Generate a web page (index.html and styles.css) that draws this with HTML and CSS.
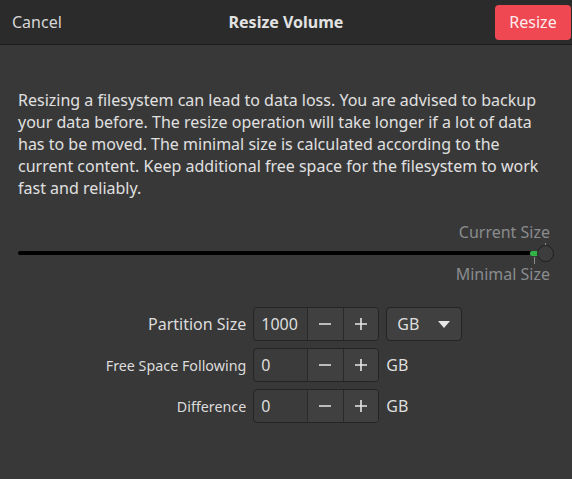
FILE: index.html
```html
<!DOCTYPE html>
<html lang="en">
<head>
  <meta charset="UTF-8">
  <title>Resize Volume</title>
  <link rel="stylesheet" href="styles.css">
</head>
<body>

  <div class="dialog">
    <header class="headerbar">
      <button class="flat-btn">Cancel</button>
      <div class="title">Resize Volume</div>
      <button class="btn destructive">Resize</button>
    </header>

    <main class="content">
      <p class="notice">Resizing a filesystem can lead to data loss. You are advised to backup your data before. The resize operation will take longer if a lot of data has to be moved. The minimal size is calculated according to the current content. Keep additional free space for the filesystem to work fast and reliably.</p>

      <div class="scale-block">
        <div class="mark-label">Current Size</div>
        <div class="scale">
          <div class="trough"></div>
          <div class="fill"></div>
          <div class="tick tick-top"></div>
          <div class="tick tick-bottom"></div>
          <div class="knob"></div>
        </div>
        <div class="mark-label">Minimal Size</div>
      </div>

      <div class="size-grid">
        <label class="row-label big">Partition Size</label>
        <div class="spin">
          <div class="spin-entry">1000</div>
          <button class="spin-btn"><svg width="16" height="16" viewBox="0 0 16 16"><path d="M2 8h12" stroke="#e6e6e6" stroke-width="1.6"/></svg></button>
          <button class="spin-btn"><svg width="16" height="16" viewBox="0 0 16 16"><path d="M2 8h12M8 2v12" stroke="#e6e6e6" stroke-width="1.6"/></svg></button>
        </div>
        <button class="combo">
          <span>GB</span>
          <svg width="12" height="7" viewBox="0 0 12 7"><path d="M0 0h12L6 7z" fill="#e6e6e6"/></svg>
        </button>

        <label class="row-label">Free Space Following</label>
        <div class="spin">
          <div class="spin-entry">0</div>
          <button class="spin-btn"><svg width="16" height="16" viewBox="0 0 16 16"><path d="M2 8h12" stroke="#e6e6e6" stroke-width="1.6"/></svg></button>
          <button class="spin-btn"><svg width="16" height="16" viewBox="0 0 16 16"><path d="M2 8h12M8 2v12" stroke="#e6e6e6" stroke-width="1.6"/></svg></button>
        </div>
        <span class="unit">GB</span>

        <label class="row-label">Difference</label>
        <div class="spin">
          <div class="spin-entry">0</div>
          <button class="spin-btn"><svg width="16" height="16" viewBox="0 0 16 16"><path d="M2 8h12" stroke="#e6e6e6" stroke-width="1.6"/></svg></button>
          <button class="spin-btn"><svg width="16" height="16" viewBox="0 0 16 16"><path d="M2 8h12M8 2v12" stroke="#e6e6e6" stroke-width="1.6"/></svg></button>
        </div>
        <span class="unit">GB</span>
      </div>
    </main>
  </div>

</body>
</html>
```
FILE: styles.css
```css
body {
  margin: 0;
  font-family: 'Noto Sans', 'Open Sans', sans-serif;
  background: #383838;
  color: #dedede;
  font-size: 16px;
}

.dialog {
  width: 572px;
  height: 479px;
  background: #383838;
}

.headerbar {
  height: 44px;
  background: #2b2b2b;
  border-bottom: 1px solid #1e1e1e;
  display: flex;
  align-items: center;
  justify-content: space-between;
  padding: 0 1px 0 0;
  position: relative;
}

.title {
  position: absolute;
  left: 0;
  right: 0;
  text-align: center;
  font-weight: bold;
  font-size: 16px;
  color: #e2e2e2;
  pointer-events: none;
}

.flat-btn {
  background: none;
  border: none;
  color: #d6d6d6;
  font: inherit;
  padding: 0 12px;
  height: 34px;
}

.btn {
  font: inherit;
  border: none;
  border-radius: 4px;
  cursor: pointer;
}

.destructive {
  background: #ef4852;
  color: #fbeeee;
  width: 76px;
  height: 35px;
}

.content {
  padding: 44px 18px 0 18px;
}

.notice {
  margin: 0;
  line-height: 22px;
  color: #e0e0e0;
}

.scale-block {
  margin-top: 22px;
}

.mark-label {
  text-align: right;
  line-height: 22px;
  color: #8a8c8e;
  padding-right: 4px;
}

/* slider: trough, fill level, marks and knob drawn over each other */
.scale {
  position: relative;
  height: 20px;
}

.trough {
  position: absolute;
  left: 0;
  right: 10px;
  top: 8px;
  height: 4px;
  border-radius: 2px;
  background: #000;
}

.fill {
  position: absolute;
  left: 512px;
  width: 9px;
  top: 8px;
  height: 5px;
  border-radius: 2px 0 0 2px;
  background: #33b249;
}

.tick {
  position: absolute;
  width: 1px;
  background: #8a8c8e;
}

.tick-top {
  left: 527px;
  top: 0;
  height: 3px;
}

.tick-bottom {
  left: 516px;
  top: 14px;
  height: 7px;
}

.knob {
  position: absolute;
  left: 519px;
  top: 2px;
  width: 15px;
  height: 15px;
  border-radius: 50%;
  background: #3d3d3d;
  border: 1px solid #1f1f1f;
}

.size-grid {
  margin-top: 22px;
  display: grid;
  grid-template-columns: auto 126px 76px;
  justify-content: center;
  column-gap: 7px;
  row-gap: 7px;
  align-items: center;
  padding-right: 4px;
}

.row-label {
  text-align: right;
  font-size: 14.3px;
  color: #dcdcdc;
}

.row-label.big {
  font-size: 16px;
}

.spin {
  display: flex;
  height: 34px;
  box-sizing: border-box;
  border: 1px solid #242424;
  border-radius: 4px;
  background: #3b3b3b;
  overflow: hidden;
}

.spin-entry {
  width: 53px;
  padding-left: 7px;
  box-sizing: border-box;
  line-height: 32px;
  color: #dedede;
}

.spin-btn {
  width: 36px;
  border: none;
  border-left: 1px solid #2a2a2a;
  background: #404040;
  padding: 0;
  display: flex;
  align-items: center;
  justify-content: center;
}

.combo {
  height: 34px;
  box-sizing: border-box;
  border: 1px solid #242424;
  border-radius: 4px;
  background: #404040;
  color: #dedede;
  font: inherit;
  display: flex;
  align-items: center;
  justify-content: space-between;
  padding: 0 11px 0 10px;
}

.unit {
  color: #dedede;
}
```
